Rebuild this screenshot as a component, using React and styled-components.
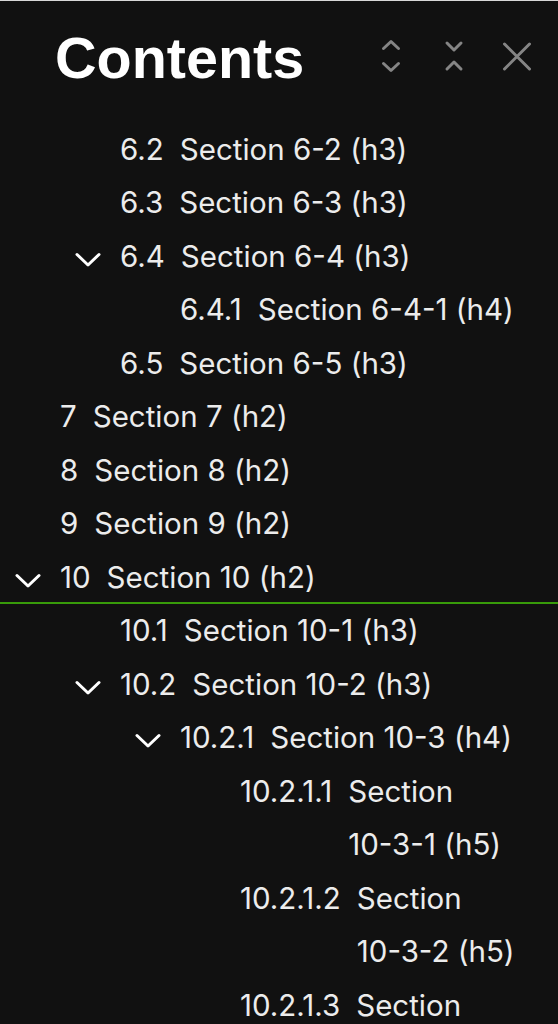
import React from 'react'
import styled, { createGlobalStyle } from 'styled-components'

const GlobalStyle = createGlobalStyle`
  html, body {
    margin: 0;
    padding: 0;
    height: 100%;
    overflow: hidden;
    background: #111111;
  }
`;

const Panel = styled.div`
  width: 558px;
  height: 1024px;
  overflow: hidden;
  background: #111111;
  border-top: 1px solid #d8d8d8;
  box-sizing: border-box;
`;

const Header = styled.div`
  display: flex;
  align-items: center;
  height: 121px;
  padding: 0 21px 8px 55px;
  box-sizing: border-box;
`;

const Title = styled.h1`
  flex: 1;
  margin: 0;
  font-family: 'Liberation Sans', Arial, sans-serif;
  font-weight: 700;
  font-size: 57.5px;
  line-height: 64px;
  color: #ffffff;
`;

const Actions = styled.div`
  display: flex;
  gap: 23px;
  margin-bottom: 4px;
`;

const IconButton = styled.button`
  width: 40px;
  height: 40px;
  padding: 0;
  border: none;
  background: transparent;
  display: flex;
  align-items: center;
  justify-content: center;
  cursor: pointer;

  svg {
    stroke: #858585;
    stroke-width: 3;
    stroke-linecap: round;
    stroke-linejoin: round;
    fill: none;
  }
`;

const List = styled.ul`
  list-style: none;
  margin: 0;
  padding: 0.5px 20px 0 0;
  font-family: Inter, 'Noto Sans', sans-serif;
  font-size: 29.5px;
  line-height: 53.5px;
  color: #ececec;
`;

const Row = styled.li`
  display: flex;
  align-items: flex-start;
  padding-left: ${p => p.depth * 60}px;
  margin-right: -20px;
  padding-right: 20px;
  box-shadow: ${p => (p.current ? 'inset 0 -2px 0 #389b0a' : 'none')};
`;

const Toggle = styled.span`
  flex: 0 0 60px;
  height: 53.5px;
  display: flex;
  align-items: center;
  justify-content: center;

  svg {
    margin: 7px 5px 0 0;
    stroke: #ffffff;
    stroke-width: 3;
    stroke-linecap: round;
    stroke-linejoin: round;
    fill: none;
  }
`;

const Num = styled.span`
  flex: none;
  margin-right: 16px;
  white-space: nowrap;
`;

const Label = styled.span`
  flex: 1;
  min-width: 0;
`;

const Word = styled.span`
  white-space: nowrap;
`;

const ExpandAll = () => (
  <svg width="40" height="40" viewBox="0 0 40 40">
    <path d="M12.5 12.5 L20 5.5 L27.5 12.5" />
    <path d="M12.5 27.5 L20 34.5 L27.5 27.5" />
  </svg>
);

const CollapseAll = () => (
  <svg width="40" height="40" viewBox="0 0 40 40">
    <path d="M13 7 L20 14 L27 7" />
    <path d="M13 33 L20 26 L27 33" />
  </svg>
);

const Close = () => (
  <svg width="40" height="40" viewBox="0 0 40 40">
    <path d="M7.5 8 L32.5 33 M32.5 8 L7.5 33" />
  </svg>
);

const Chevron = () => (
  <svg width="26" height="16" viewBox="0 0 26 16">
    <path d="M2 2.5 L13 13 L24 2.5" />
  </svg>
);

const items = [
  { depth: 1, num: '6.2', title: 'Section 6-2 (h3)' },
  { depth: 1, num: '6.3', title: 'Section 6-3 (h3)' },
  { depth: 1, num: '6.4', title: 'Section 6-4 (h3)', open: true },
  { depth: 2, num: '6.4.1', title: 'Section 6-4-1 (h4)' },
  { depth: 1, num: '6.5', title: 'Section 6-5 (h3)' },
  { depth: 0, num: '7', title: 'Section 7 (h2)' },
  { depth: 0, num: '8', title: 'Section 8 (h2)' },
  { depth: 0, num: '9', title: 'Section 9 (h2)' },
  { depth: 0, num: '10', title: 'Section 10 (h2)', open: true, current: true },
  { depth: 1, num: '10.1', title: 'Section 10-1 (h3)' },
  { depth: 1, num: '10.2', title: 'Section 10-2 (h3)', open: true },
  { depth: 2, num: '10.2.1', title: 'Section 10-3 (h4)', open: true },
  { depth: 3, num: '10.2.1.1', title: 'Section 10-3-1 (h5)' },
  { depth: 3, num: '10.2.1.2', title: 'Section 10-3-2 (h5)' },
  { depth: 3, num: '10.2.1.3', title: 'Section 10-3-3 (h5)' },
];

// keep hyphenated numbers like 10-3-1 on one line
const renderTitle = title =>
  title.split(' ').map((w, i) => (
    <React.Fragment key={i}>
      {i > 0 && ' '}
      <Word>{w}</Word>
    </React.Fragment>
  ));

export default function App() {
  return (
    <>
      <GlobalStyle />
      <Panel>
        <Header>
          <Title>Contents</Title>
          <Actions>
            <IconButton aria-label="Expand all"><ExpandAll /></IconButton>
            <IconButton aria-label="Collapse all"><CollapseAll /></IconButton>
            <IconButton aria-label="Close"><Close /></IconButton>
          </Actions>
        </Header>
        <List>
          {items.map(item => (
            <Row key={item.num} depth={item.depth} current={item.current}>
              <Toggle>{item.open && <Chevron />}</Toggle>
              <Num>{item.num}</Num>
              <Label>{renderTitle(item.title)}</Label>
            </Row>
          ))}
        </List>
      </Panel>
    </>
  );
}
